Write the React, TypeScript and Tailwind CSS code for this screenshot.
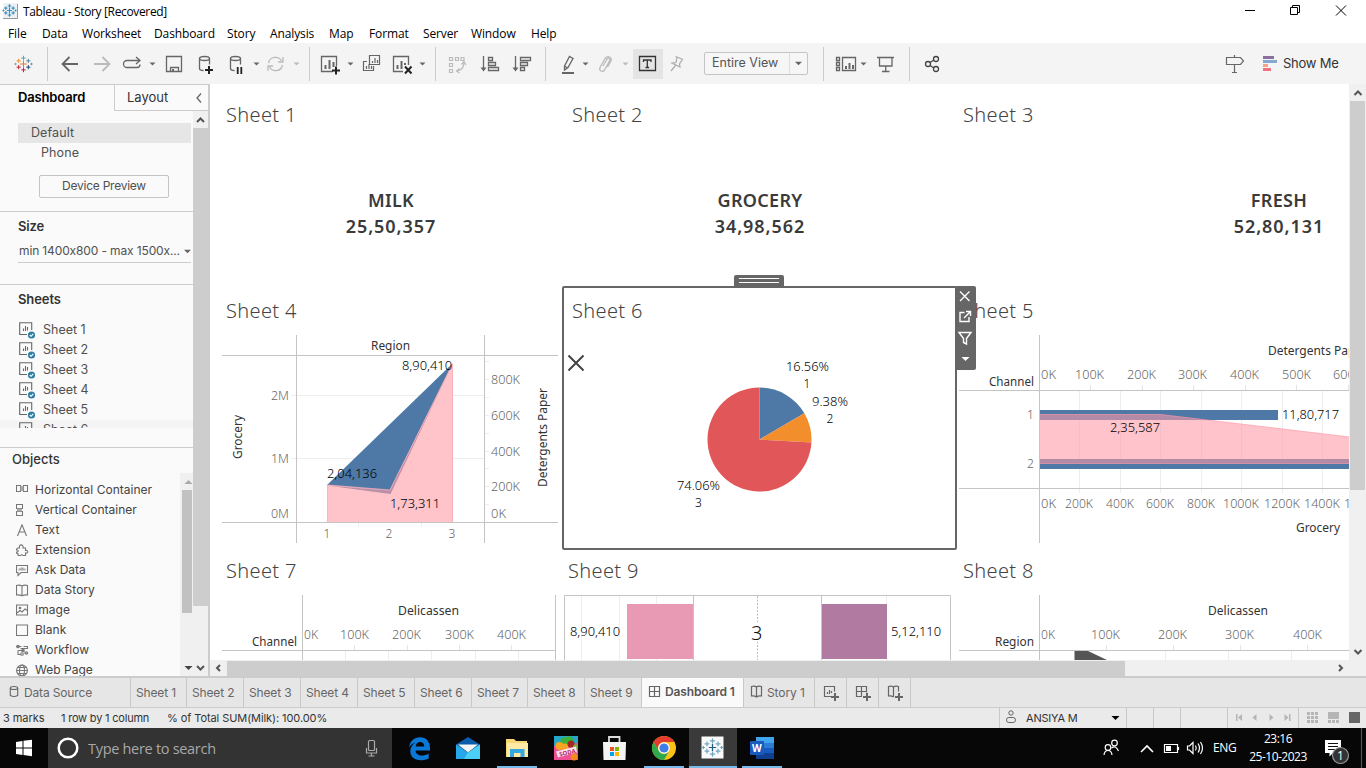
import React from "react";

type Kids = { children?: React.ReactNode };

/* Icon whose drawing coordinates are window coordinates. */
function Ic({ x, y, w, h, c = "#666", sw = 1.3, children }: Kids & { x: number; y: number; w: number; h: number; c?: string; sw?: number }) {
  return (
    <svg className="block shrink-0" width={w} height={h} viewBox={`${x} ${y} ${w} ${h}`} fill="none" stroke={c} strokeWidth={sw}>
      {children}
    </svg>
  );
}

function Tb({ x, w, c, sw, children }: Kids & { x: number; w: number; c?: string; sw?: number }) {
  return <Ic x={x} y={43} w={w} h={41} c={c} sw={sw}>{children}</Ic>;
}

function Caret({ x, y = 64, c = "#666", s = 3 }: { x: number; y?: number; c?: string; s?: number }) {
  return <path d={`M${x - s} ${y - s / 2}h${2 * s}l${-s} ${s}z`} fill={c} stroke="none" />;
}

const plusSpots = [
  [0, 0, 3.2], [0, -5.6, 2.2], [0, 5.6, 2.2], [-4.6, -3, 2], [4.6, -3, 2], [-4.6, 3, 2], [4.6, 3, 2], [-7.6, 0, 1.2], [7.6, 0, 1.2],
];
const plusMix = ["#e8762d", "#6aa0b0", "#c72037", "#eb9129", "#5b879b", "#c72037", "#1f457e", "#77aabb", "#7099a6"];

function Plus({ x, y, k = 1, mono, sw = 1 }: { x: number; y: number; k?: number; mono?: string; sw?: number }) {
  return (
    <g strokeWidth={sw}>
      {plusSpots.map(([dx, dy, r], i) => {
        const px = x + dx * k, py = y + dy * k, q = r * k;
        return <path key={i} stroke={mono ?? plusMix[i]} d={`M${px - q} ${py}H${px + q}M${px} ${py - q}V${py + q}`} />;
      })}
    </g>
  );
}

/* Chart label fitted to a given width. */
function L({ x, y, w, s = 12, c = "#666", b = 300, children }: Kids & { x: number; y: number; w?: number; s?: number; c?: string; b?: number }) {
  return (
    <text x={x} y={y + s * 0.36} textLength={w} lengthAdjust="spacingAndGlyphs" fontSize={s} fill={c} fontWeight={b} stroke="none">
      {children}
    </text>
  );
}

function Chart({ x, y, w, h, children }: Kids & { x: number; y: number; w: number; h: number }) {
  return (
    <svg className="block shrink-0 font-['Noto_Sans',sans-serif]" width={w} height={h} viewBox={`${x} ${y} ${w} ${h}`} fill="none">
      {children}
    </svg>
  );
}

const menus: [string, string][] = [
  ["File", "w-[34px]"], ["Data", "w-[40px]"], ["Worksheet", "w-[72px]"], ["Dashboard", "w-[73px]"], ["Story", "w-[43px]"], ["Analysis", "w-[59px]"],
  ["Map", "w-[40px]"], ["Format", "w-[54px]"], ["Server", "w-[48px]"], ["Window", "w-[60px]"], ["Help", "w-[40px]"],
];

function TitleBar() {
  return (
    <header className="h-[43px] bg-white font-['Open_Sans','Noto_Sans',sans-serif] text-[12px] text-black">
      <div className="flex h-[23px] items-center">
        <Ic x={0} y={0} w={23} h={23}>
          <rect x="3" y="3" width="15" height="16" fill="#eef1f3" stroke="none" />
          <path d="M17.500 4V18.500H3" stroke="#999" strokeWidth="1" />
          <Plus x={9.500} y={10.500} k={0.8} mono="#3f8fc0" sw={1.200} />
        </Ic>
        <span className="pt-px text-[12px] tracking-[-0.35px]">Tableau - Story [Recovered]</span>
        <span className="grow" />
        <Ic x={1236} y={0} w={130} h={23} c="#000" sw={1}>
          <path d="M1245 10.500h10M1290.500 7.500h7v7h-7zM1292.500 7V5.500h7v7H1298M1336 5.500l10 10M1346 5.500l-10 10" />
        </Ic>
      </div>
      <nav className="flex h-5 items-center pt-[2px] pl-2">
        {menus.map(([m, w]) => <span key={m} className={`${w} shrink-0 tracking-[-0.12px]`}>{m}</span>)}
      </nav>
    </header>
  );
}

function Toolbar() {
  const g = "#bbb";
  return (
    <div className="flex h-[41px] items-center bg-[#f4f4f4]">
      <Tb x={0} w={50}><Plus x={23.500} y={64} k={1.050} /><path d="M47.500 47v34" stroke="#ccc" strokeWidth="1" /></Tb>
      <Tb x={50} w={36} sw={1.800}><path d="M78 64H63M69.500 57L62.500 64l7 7" /></Tb>
      <Tb x={86} w={30} c={g} sw={1.800}><path d="M94 64h15M102.500 57l7 7-7 7" /></Tb>
      <Tb x={116} w={44}><path d="M134 67.500h-7a3.500 3.500 0 0 1 0-7h12M136 57l4 3.500-4 3.500M134 67.500h3a3 3 0 0 0 3-3" /><Caret x={152.500} /></Tb>
      <Tb x={160} w={30}><path d="M166.500 56.500h15v15h-15zM170.500 71.500v-4h8v4" /><path d="M172 69h2v3h-2z" fill="#666" stroke="none" /></Tb>
      <Tb x={190} w={35}><ellipse cx="204.500" cy="58.500" rx="5" ry="2" /><path d="M199.500 58.500v10q0 2 4 2M209.500 58.500v6" /><path d="M205 70h8M209 66v8" stroke="#222" strokeWidth="2" /></Tb>
      <Tb x={225} w={38}><ellipse cx="235.500" cy="58.500" rx="5" ry="2" /><path d="M230.500 58.500v10q0 2 4 2M240.500 58.500v6" /><path d="M237.700 67v7M241.300 67v7" stroke="#222" strokeWidth="1.800" /><Caret x={256.500} /></Tb>
      <Tb x={263} w={48} c={g}><path d="M268.500 63a7 7 0 0 1 13-2M282.500 65a7 7 0 0 1-13 2M283 57v5h-5M268 71v-5h5" /><Caret x={296.500} c={g} /><path d="M309.500 47v34" stroke="#ccc" strokeWidth="1" /></Tb>
      <Tb x={311} w={47}><path d="M333 71.500h-11.500v-15h15V66" /><path d="M325.500 69v-4M329.500 69v-9M333.500 67v-5" strokeWidth="2" /><path d="M332 70.500h8M336 66.500v8" stroke="#222" strokeWidth="2" /><Caret x={350.500} /></Tb>
      <Tb x={358} w={30}><path d="M369.500 55.500h10v9h-10zM367 61.500h-3.500v9h10V66M372.500 63v-2M375 63v-5M377.500 63v-3M366.500 69v-3M369 69v-5M371.500 69v-3" strokeWidth="1.200" /></Tb>
      <Tb x={388} w={50}><path d="M403 71.500h-9.500v-15h15V65" /><path d="M397.500 69v-4M401.500 69v-8M405 65v-2" strokeWidth="2" /><path d="M405 66.500l6.500 7M411.500 66.500l-6.500 7" stroke="#222" strokeWidth="2" /><Caret x={422.500} /><path d="M435.500 47v34" stroke="#ccc" strokeWidth="1" /></Tb>
      <Tb x={438} w={34} c={g} sw={1.200}><path d="M449.500 57.500h3v3h-3zM455.500 57.500h3v3h-3zM461 57.500h3v3h-3zM449.500 63.500h3v3h-3zM449.500 69.500h3v3h-3zM464 62q0 8-7 9M461.500 64.500l2.500-3 2 3.500M459.500 68.500l-3 2.500 3 2" /></Tb>
      <Tb x={472} w={34}><path d="M483.500 56v14M488.500 57.500h4v3h-4zM488.500 62.500h7v3h-7zM488.500 67.500h10v3h-10z" /><path d="M480.500 67.500h6l-3 4z" fill="#666" stroke="none" /></Tb>
      <Tb x={506} w={44}><path d="M515.500 56v14M520.500 57.500h10v3h-10zM520.500 62.500h7v3h-7zM520.500 67.500h4v3h-4z" /><path d="M512.500 67.500h6l-3 4z" fill="#666" stroke="none" /><path d="M545.500 47v34" stroke="#ccc" strokeWidth="1" /></Tb>
      <Tb x={550} w={42}><path d="M564.500 66l5-9.500 3.500 2-5 9-3.500 2.500zM564.500 66l3.500 2" /><path d="M562 73h12" strokeWidth="2" /><Caret x={585.500} /></Tb>
      <Tb x={592} w={41} c={g}><path d="M603 66l4-7q1.500-1.500 2.500 0t-.5 3l-4.500 8q-1.500 2-3.500 1t-1-3.500l5-9q2-2.500 4.500-1.500t1.500 4l-3.500 6" /><Caret x={625.500} c={g} /></Tb>
      <div className="h-[30px] bg-[#e4e4e4]"><Ic x={633} y={49} w={30} h={30} c="#333"><path d="M639.500 56.500h16v14h-16zM643.500 62v-2h7.500v2M647.300 60v7.500M645.500 67.500h3.600" strokeWidth="1.300" /></Ic></div>
      <Tb x={663} w={41} c="#aaa" sw={1.200}><path d="M675.500 56.500l7.500 3M677 57.500l-1 5-4 .5 8 4-.5-3 3-4.500M675.500 65.500l-4.500 5.500" /></Tb>
      <div className="flex h-[23px] w-[104px] items-center rounded-xs border border-[#c4c4c4] bg-[#f6f6f6]">
        <span className="w-[84px] shrink-0 pl-[7px] font-['Inter',sans-serif] text-[12.5px] text-[#555]">Entire View</span>
        <span className="flex h-full grow items-center justify-center border-l border-[#ddd]"><Ic x={0} y={0} w={9} h={7}><Caret x={4.500} y={3.500} s={3.500} /></Ic></span>
      </div>
      <Tb x={808} w={64}><path d="M823.500 47v34" stroke="#ccc" strokeWidth="1" /><path d="M842.500 57.500h13v13h-13zM836.500 57.500h3v3h-3zM836.500 62.500h3v3h-3zM836.500 67.500h3v3h-3z" /><path d="M846 69v-3M849.500 69v-6M853 69v-4" strokeWidth="2" /><Caret x={863.500} /></Tb>
      <Tb x={872} w={96}><path d="M877 57.500h17M879.500 57.500v8.500h12.500v-8.500M885.700 66v5M882 71.500h7.500" /><path d="M909.500 47v34" stroke="#ccc" strokeWidth="1" /><g stroke="#444"><circle cx="928" cy="64" r="2.500" /><circle cx="936" cy="59" r="2.500" /><circle cx="936" cy="69" r="2.500" /><path d="M930 62.500l4-2.500M930 65.500l4 2.500" /></g></Tb>
      <span className="grow" />
      <Tb x={1216} w={67} sw={1.200}><path d="M1226.500 57.500h14l3 3.500-3 3.500h-14zM1234.500 55v2.500M1234.500 64.500v7.500M1232 72.500h5" />
        <g stroke="none"><path d="M1263 56h11v3h-11z" fill="#8b6f9c" /><path d="M1263 60h14v3h-14z" fill="#82a9d0" /><path d="M1263 64h5v3h-5z" fill="#f4a582" /><path d="M1263 68h8v3h-8z" fill="#f0717f" /></g></Tb>
      <span className="w-[83px] font-['Inter',sans-serif] text-[13px] tracking-[-0.25px] text-[#333]">Show Me</span>
    </div>
  );
}

const objects: [string, React.ReactNode][] = [
  ["Horizontal Container", <><path d="M.5 1.500h4v6h-4zM7.500 1.500h4v6h-4z" /><path d="M4.500 2h3v5h-3z" fill="#aaa" stroke="none" /></>],
  ["Vertical Container", <><path d="M.5.500h6v4h-6zM.5 7.500h6v4h-6z" /><path d="M1 4.500h5v3H1z" fill="#aaa" stroke="none" /></>],
  ["Text", <path d="M1.500 12L6 .8 10.500 12M3 8h6" />],
  ["Extension", <path d="M2 4h1.500C2.500-.3 8 0 7 4h2.500v2.500c3-1 3 3.500 0 2.500v2.500H7q-1-1.500-2.500 0H2V9.500q-2 0-1.500-1.500h1q1.500-1 0-2H.5Q.5 4 2 4z" />],
  ["Ask Data", <><path d="M.5 1.500h11v7H5l-3 3v-3H.5z" /><path d="M3 6V5h2V4h2v1h2v1z" fill="#aaa" stroke="#aaa" /></>],
  ["Data Story", <path d="M.5 1.500q3-1 5.500.5 2.500-1.500 5.500-.5v9.500q-3-.5-5.500.8Q3.500 10.500.5 11zM6 2v9.500" />],
  ["Image", <><path d="M.5 1h11v10H.5z" /><path d="M1 9l3-2.500 2 1.500 3-3 2.500 1.500" /><circle cx="4" cy="4" r=".8" fill="#777" /></>],
  ["Blank", <path d="M.5 1h11v10.500H.5z" />],
  ["Workflow", <><path d="M.5 2.500h5M7.500 2.500h4v2h-7M2 6.500h6M8 9h3.500M2 6.500v4h3" /><circle cx="2" cy="2.500" r="1.300" /><circle cx="7" cy="6.500" r="1.300" /><circle cx="6" cy="10" r="1.300" /><circle cx="10.500" cy="9" r="1.200" /></>],
  ["Web Page", <><circle cx="6" cy="6.500" r="5.400" /><ellipse cx="6" cy="6.500" rx="2.500" ry="5.400" /><path d="M.6 6.500h10.800M1.500 3.500h9M1.500 9.500h9" /></>],
];

function SheetRow({ n }: { n: number }) {
  return (
    <div className="flex h-5 shrink-0 items-center pl-[19px]">
      <svg className="block" width="24" height="18" viewBox="0 0 24 18" fill="none" stroke="#666" strokeWidth="1.100">
        <path d="M8 13.500H.7V1.700h12V9M4.500 10V7.500M6.500 10V5M8.500 9.500V6" />
        <circle cx="12.500" cy="14" r="3.600" fill="#2f7fa8" stroke="none" /><path d="M10.800 14l1.300 1.300 2.200-2.500" stroke="#fff" />
      </svg>
      <span>Sheet {n}</span>
    </div>
  );
}

function Sidebar() {
  return (
    <aside className="flex w-[210px] shrink-0 flex-col border-t border-r-2 border-[#ccc] bg-[#fafafa] font-['Inter',sans-serif] text-[12.5px] text-[#505050]">
      <div className="flex h-[26px] shrink-0">
        <div className="flex w-[114px] items-center pl-[18px] text-[13px] font-semibold tracking-[-0.15px] text-black">Dashboard</div>
        <div className="flex grow items-center border-b border-l border-[#ccc] pl-3 text-[13px] text-[#333]">
          <span className="w-[68px]">Layout</span>
          <Ic x={0} y={0} w={8} h={12}><path d="M6 1.500L2 6l4 4.500" /></Ic>
        </div>
      </div>
      <div className="flex min-h-0 grow">
        <div className="flex w-[193px] flex-col pt-3">
          <div className="mr-0.5 ml-[18px] flex h-5 shrink-0 items-center bg-[#e6e6e6] pt-px pl-[13px] tracking-[0.1px]">Default</div>
          <div className="flex h-5 shrink-0 items-center pt-px pl-[41px] tracking-[0.1px]">Phone</div>
          <div className="mt-3 ml-[39px] flex h-[23px] w-[130px] shrink-0 items-center justify-center rounded-xs border border-[#c4c4c4] pb-[2px] text-[12px] tracking-[-0.25px]">Device Preview</div>
          <div className="mt-[13px] h-[30px] shrink-0 border-t border-[#ccc] pt-[5px] pl-[18px] text-[13px] leading-[18px] font-semibold tracking-[-0.2px] text-[#333]">Size</div>
          <div className="mr-0.5 ml-[18px] flex h-[22px] shrink-0 items-center justify-between border-b border-[#ccc] pb-[2px] pl-px text-[12px]">
            <span className="tracking-[-0.13px] whitespace-nowrap">min 1400x800 - max 1500x...</span>
            <Ic x={0} y={0} w={8} h={8}><Caret x={4.500} y={4.500} s={3.500} /></Ic>
          </div>
          <div className="mt-[21px] h-[35px] shrink-0 border-t border-[#ccc] pt-[5px] pl-[18px] text-[13px] leading-[18px] font-semibold tracking-[-0.1px] text-[#333]">Sheets</div>
          <div className="flex h-[109px] shrink-0 flex-col overflow-hidden pt-px">
            {[1, 2, 3, 4, 5].map((n) => <SheetRow key={n} n={n} />)}
            <div className="bg-[#f4f4f4]"><SheetRow n={6} /></div>
          </div>
          <div className="mt-[19px] h-[26px] shrink-0 border-t border-[#ccc] pt-[2px] pl-3 text-[13px] leading-[18px] font-medium text-[#333]">Objects</div>
          <div className="flex min-h-0 grow overflow-hidden">
            <div className="w-[180px] pt-[7px] text-[12px] text-[#444]">
              {objects.map(([name, art]) => (
                <div key={name} className="flex h-5 items-center pl-4">
                  <svg className="mr-[6px] block" width="13" height="13" viewBox="0 0 13 13" fill="none" stroke="#777" strokeWidth="1.100">{art}</svg>
                  <span className="tracking-[0.02px] whitespace-nowrap">{name}</span>
                </div>
              ))}
            </div>
            <div className="flex w-[13px] flex-col justify-between bg-[#f0f0f0] pl-0.5">
              <Ic x={0} y={0} w={12} h={17}><path d="M2.500 11l4-4 4 4z" fill="#aaa" stroke="none" /></Ic>
              <div className="h-[123px] w-[10px] bg-[#c1c1c1]" />
              <span className="grow" />
              <Ic x={0} y={0} w={12} h={17}><path d="M2.500 7l4 4 4-4z" fill="#444" stroke="none" /></Ic>
            </div>
          </div>
        </div>
        <div className="flex w-[15px] flex-col bg-[#f0f0f0]">
          <Ic x={0} y={0} w={15} h={17} c="#555" sw={2}><path d="M4 11l3.500-3.500L11 11" /></Ic>
          <div className="h-[478px] bg-[#cdcdcd]" />
          <span className="grow" />
          <Ic x={0} y={0} w={15} h={17} c="#555" sw={2}><path d="M4 7l3.500 3.500L11 7" /></Ic>
        </div>
      </div>
    </aside>
  );
}

function SheetTitle({ children, pad = "pl-4" }: Kids & { pad?: string }) {
  return <h2 className={`${pad} font-['Noto_Sans',sans-serif] text-[20px] leading-[28px] font-light tracking-[0.35px] text-[#444]`}>{children}</h2>;
}

function Ban({ name, value }: { name: string; value: string }) {
  return (
    <div className="pt-[58px] text-center font-['Noto_Sans',sans-serif] text-[18px] leading-[26px] font-semibold text-[#3a3a3a]">
      <div className="tracking-[0.3px]">{name}</div>
      <div className="tracking-[0.95px]">{value}</div>
    </div>
  );
}

const dark = "#333";

function Sheet4() {
  return (
    <Chart x={210} y={330} w={353} h={215}>
      <path d="M291 395.500h193M291 458.500h193M358.500 523v4M421.500 523v4" stroke="#eee" />
      {[361.5, 379.5, 397.5, 415.5, 433.5, 451.5, 468.5, 486.5, 504.5].map((y) => <path key={y} d={`M485 ${y}h4`} stroke="#eee" />)}
      <path d="M327 485L452.500 363.500V522H327z" fill="#4e79a7" />
      <path d="M327 485l63 5.500L452.500 363.500V522H327z" fill="#ffc3ca" />
      <path d="M327 485.500l63 5L452 365l-61.500 129z" fill="#ba8fa7" />
      <path d="M327.500 522V485l62.500 5 62.500-126v158" stroke="#ffb0ba" strokeOpacity=".8" />
      <path d="M296.500 335v208M484.500 335v208M222 355.500h336M222 522.500h336" stroke="#c4c4c4" />
      <L x={371} y={345.500} w={39} c={dark} b={400}>Region</L>
      <L x={271} y={395.500} w={18}>2M</L><L x={271} y={458.500} w={18}>1M</L><L x={271} y={513.500} w={18}>0M</L>
      <L x={323.500} y={533.500}>1</L><L x={385.500} y={533.500}>2</L><L x={448.500} y={533.500}>3</L>
      <L x={491} y={379.500} w={29}>800K</L><L x={491} y={415.500} w={29}>600K</L><L x={491} y={451.500} w={29}>400K</L><L x={491} y={486.500} w={29}>200K</L><L x={491} y={513.500} w={15}>0K</L>
      <L x={402} y={365.500} w={50} c="#000">8,90,410</L><L x={327} y={473.500} w={50} c="#000">2,04,136</L><L x={390} y={503.500} w={50} c="#000">1,73,311</L>
      <g transform="rotate(-90 238 437)"><L x={216} y={437} w={44} c={dark} b={400}>Grocery</L></g>
      <g transform="rotate(-90 543 437)"><L x={493} y={437} w={99} c={dark} b={400}>Detergents Paper</L></g>
    </Chart>
  );
}

function Sheet6() {
  const R = 52, cx = 759.5, cy = 439.5;
  const pt = (p: number) => `${cx + R * Math.sin(p * 2 * Math.PI)} ${cy - R * Math.cos(p * 2 * Math.PI)}`;
  const slice = (a: number, b: number) => `M${cx} ${cy}L${pt(a)}A${R} ${R} 0 ${b - a > 0.5 ? 1 : 0} 1 ${pt(b)}z`;
  return (
    <Chart x={565} y={330} w={388} h={215}>
      <path d={slice(0, 0.1656)} fill="#4e79a7" /><path d={slice(0.1656, 0.2594)} fill="#f28e2b" /><path d={slice(0.2594, 1)} fill="#e15759" />
      <path d="M568.500 355.500l15 15M583.500 355.500l-15 15" stroke="#444" strokeWidth="2" />
      <L x={786} y={366.500} w={43} c="#000">16.56%</L><L x={803.500} y={384} c="#000">1</L>
      <L x={812} y={401.500} w={36} c="#000">9.38%</L><L x={826.500} y={419} c="#000">2</L>
      <L x={677} y={485.500} w={43} c="#000">74.06%</L><L x={695} y={503} c="#000">3</L>
    </Chart>
  );
}

function Sheet5() {
  const top: [string, number, number][] = [["0K", 1041, 15], ["100K", 1075, 29], ["200K", 1127, 29], ["300K", 1178, 29], ["400K", 1230, 29], ["500K", 1282, 29], ["600K", 1333, 29]];
  const low: [string, number, number][] = [["0K", 1041, 15], ["200K", 1065, 28], ["400K", 1106, 28], ["600K", 1146, 28], ["800K", 1187, 28], ["1000K", 1223, 36], ["1200K", 1264, 36], ["1400K", 1304, 36], ["1600K", 1344, 36]];
  return (
    <Chart x={957} y={330} w={392} h={215}>
      {[1090.5, 1142.5, 1193.5, 1245.5, 1296.5, 1348.5].map((x) => <path key={x} d={`M${x} 385v5`} stroke="#e4e4e4" />)}
      {[1079.5, 1120.5, 1160.5, 1201.5, 1241.5, 1282.5, 1322.5].map((x) => <path key={x} d={`M${x} 391v102`} stroke="#eee" />)}
      <path d="M1040 410h238v10h-238zM1040 459h309v10h-309z" fill="#4e79a7" />
      <path d="M1040 414h120l189 22.500V464h-309z" fill="#ff98a5" fillOpacity=".58" />
      <path d="M1040 414.500h120l189 22.500M1040 463.500h309" stroke="#ff98a5" strokeOpacity=".4" />
      <path d="M1039.500 335v208M959 390.500h390M959 488.500h390" stroke="#c4c4c4" />
      <L x={1268} y={350.500} w={99} c={dark} b={400}>Detergents Paper</L>
      {top.map(([t, x, w]) => <L key={t} x={x} y={374.500} w={w}>{t}</L>)}
      {low.map(([t, x, w]) => <L key={t} x={x} y={503.500} w={w}>{t}</L>)}
      <L x={989} y={381.500} w={45} c={dark} b={400}>Channel</L><L x={1027} y={414.500}>1</L><L x={1027} y={463.500}>2</L>
      <L x={1282} y={414.500} w={57} c="#000">11,80,717</L><L x={1110} y={427.500} w={50} c="#000">2,35,587</L>
      <L x={1296} y={528} w={44} c={dark} b={400}>Grocery</L>
    </Chart>
  );
}

function Sheet7() {
  const t: [string, number, number][] = [["0K", 304, 14], ["100K", 340, 29], ["200K", 392, 29], ["300K", 445, 29], ["400K", 497, 29]];
  return (
    <Chart x={210} y={590} w={353} h={70}>
      {[354.5, 407.5, 459.5, 511.5].map((x) => <path key={x} d={`M${x} 645v5`} stroke="#e4e4e4" />)}
      {[345.5, 388.5, 431.5, 475.5, 518.5].map((x) => <path key={x} d={`M${x} 651v9`} stroke="#eee" />)}
      <path d="M302.500 595v65M555.500 595v65M222 650.500h333" stroke="#c4c4c4" />
      <L x={398} y={611} w={61} c={dark} b={400}>Delicassen</L><L x={252} y={642} w={45} c={dark} b={400}>Channel</L>
      {t.map(([s, x, w]) => <L key={s} x={x} y={635} w={w}>{s}</L>)}
    </Chart>
  );
}

function Sheet9() {
  return (
    <Chart x={563} y={590} w={394} h={70}>
      <path d="M581.500 596v64M619.500 596v64M656.500 596v64M886.500 596v64" stroke="#eee" />
      <path d="M564.500 660V595.500h386V660M693.500 596v64M821.500 596v64" stroke="#c4c4c4" />
      <path d="M757.500 596v64" stroke="#bbb" strokeDasharray="2 1.500" />
      <path d="M627 604h66v55h-66z" fill="#e899b4" /><path d="M822 604h65v55h-65z" fill="#b07aa1" />
      <path d="M748 622h18v20h-18z" fill="#fff" />
      <L x={570} y={632} w={50} c="#000">8,90,410</L><L x={891} y={632} w={50} c="#000">5,12,110</L><L x={751} y={633} s={20} c="#111">3</L>
    </Chart>
  );
}

function Sheet8() {
  const t: [string, number, number][] = [["0K", 1041, 14], ["100K", 1091, 29], ["200K", 1158, 29], ["300K", 1225, 29], ["400K", 1293, 29]];
  return (
    <Chart x={957} y={590} w={392} h={70}>
      {[1106.5, 1173.5, 1240.5, 1307.5].map((x) => <path key={x} d={`M${x} 645v5`} stroke="#e4e4e4" />)}
      {[1165.5, 1228.5, 1291.5].map((x) => <path key={x} d={`M${x} 651v9`} stroke="#eee" />)}
      <path d="M1039.500 595v65M959 650.500h390" stroke="#c4c4c4" />
      <path d="M1074.500 651H1088l19 9h-32.500z" fill="#555" />
      <L x={1208} y={611} w={60} c={dark} b={400}>Delicassen</L><L x={995} y={642} w={39} c={dark} b={400}>Region</L>
      {t.map(([s, x, w]) => <L key={s} x={x} y={635} w={w}>{s}</L>)}
    </Chart>
  );
}

function Canvas() {
  return (
    <main className="relative grid h-[576px] w-[1139px] grid-cols-[353px_394px_392px] grid-rows-[196px_260px_120px] overflow-hidden bg-white">
      <section className="w-[362px] pt-[17px]"><SheetTitle>Sheet 1</SheetTitle><Ban name="MILK" value="25,50,357" /></section>
      <section className="pt-[17px]"><SheetTitle pad="pl-[9px]">Sheet 2</SheetTitle><Ban name="GROCERY" value="34,98,562" /></section>
      <section className="w-[644px] pt-[17px]"><SheetTitle pad="pl-1.5">Sheet 3</SheetTitle><Ban name="FRESH" value="52,80,131" /></section>
      <section className="pt-[17px]"><SheetTitle>Sheet 4</SheetTitle><div className="pt-[5px]"><Sheet4 /></div></section>
      <section className="pt-[17px]"><SheetTitle pad="pl-[9px]">Sheet 6</SheetTitle><div className="pt-[5px] pl-0.5"><Sheet6 /></div></section>
      <section className="pt-[17px]"><SheetTitle pad="pl-1.5">Sheet 5</SheetTitle><div className="pt-[5px]"><Sheet5 /></div></section>
      <section className="pt-[17px]"><SheetTitle>Sheet 7</SheetTitle><div className="pt-[5px]"><Sheet7 /></div></section>
      <section className="pt-[17px]"><SheetTitle pad="pl-[5px]">Sheet 9</SheetTitle><div className="pt-[5px]"><Sheet9 /></div></section>
      <section className="pt-[17px]"><SheetTitle pad="pl-1.5">Sheet 8</SheetTitle><div className="pt-[5px]"><Sheet8 /></div></section>
      <div className="absolute top-[202px] left-[352px] h-[264px] w-[395px] rounded-xs border-2 border-[#666]" />
      <div className="absolute top-[191px] left-[524px] flex h-[11px] w-[50px] flex-col justify-center gap-[3px] rounded-t-xs bg-[#666] px-[5px]">
        <span className="h-px bg-white" /><span className="h-px bg-white" />
      </div>
      <div className="absolute top-[202px] left-[745px] h-[84px] w-[21px] rounded-xs bg-[#666]">
        <Ic x={955} y={286} w={21} h={84} c="#fff" sw={1.400}>
          <path d="M960 291.500l9.500 9.500M969.500 291.500L960 301M964.500 312.500h-4.500v9h9v-4.500M964 318l6-6M966 311.500h4.500v4.500M959 332.500h12l-4.500 6v5.500l-3-1.500v-4z" /><path d="M961.500 357h8l-4 4z" fill="#fff" stroke="none" />
        </Ic>
      </div>
    </main>
  );
}

function Work() {
  return (
    <div className="flex h-[592px] w-[1156px] flex-col bg-[#f0f0f0]">
      <div className="flex h-[576px]">
        <Canvas />
        <div className="flex w-[17px] flex-col bg-[#f0f0f0] pl-px">
          <Ic x={0} y={0} w={16} h={17} c="#555" sw={2}><path d="M4.500 11l3.500-3.500 3.500 3.500" /></Ic>
          <div className="h-[389px] w-[15px] bg-[#cdcdcd]" />
          <span className="grow" />
          <Ic x={0} y={0} w={16} h={17} c="#555" sw={2}><path d="M4.500 7l3.500 3.500L11.500 7" /></Ic>
        </div>
      </div>
      <div className="flex h-4 w-[1139px] items-center">
        <Ic x={0} y={0} w={17} h={16} c="#555" sw={2}><path d="M10 5L7 8l3 3" /></Ic>
        <div className="h-[15px] w-[898px] bg-[#cdcdcd]" />
        <span className="grow" />
        <Ic x={0} y={0} w={17} h={16} c="#555" sw={2}><path d="M7 5l3 3-3 3" /></Ic>
      </div>
    </div>
  );
}

const tabs: [string, string][] = [
  ["Sheet 1", "w-[56px]"], ["Sheet 2", "w-[57px]"], ["Sheet 3", "w-[57px]"], ["Sheet 4", "w-[57px]"], ["Sheet 5", "w-[57px]"],
  ["Sheet 6", "w-[57px]"], ["Sheet 7", "w-[56px]"], ["Sheet 8", "w-[57px]"], ["Sheet 9", "w-[57px]"],
];

function Tabs() {
  return (
    <div className="flex h-8 border-t-2 border-b border-[#ccc] bg-[#e6e6e6] font-['Inter',sans-serif] text-[12px] text-[#666]">
      <div className="flex w-[131px] items-center border-r border-[#c8c8c8]">
        <Ic x={0} y={678} w={24} h={29} sw={1.100}><ellipse cx="14" cy="688" rx="3.700" ry="1.500" /><path d="M10.300 688v7.500q3.700 2 7.400 0V688" /></Ic>
        <span className="tracking-[-0.15px]">Data Source</span>
      </div>
      {tabs.map(([t, w]) => <div key={t} className={`${w} flex shrink-0 items-center border-r border-[#c8c8c8] pl-[5px] tracking-[-0.15px] whitespace-nowrap`}>{t}</div>)}
      <div className="flex w-[102px] shrink-0 items-center border-r border-[#c8c8c8] bg-[#fafafa] font-semibold text-[#555]">
        <Ic x={642} y={678} w={23} h={29} sw={1.200}><path d="M649.500 686.500h10v10h-10zM654.500 686.500v10M649.500 691.500h10" /></Ic>
        <span className="pb-0.5 tracking-[-0.15px] whitespace-nowrap">Dashboard 1</span>
      </div>
      <div className="flex w-[71px] shrink-0 items-center border-r border-[#c8c8c8]">
        <Ic x={744} y={678} w={23} h={29} sw={1.200}><path d="M751.500 686.500q3-1 5 .5 2-1.500 5-.5v9.500q-3-.5-5 1-2-1.500-5-1zM756.500 687v10" /></Ic>
        <span className="tracking-[-0.1px] whitespace-nowrap">Story 1</span>
      </div>
      <div className="w-8 border-r border-[#c8c8c8]"><Ic x={815} y={678} w={31} h={29} sw={1.200}><path d="M831 696.500h-6.500v-10h10v5M827.500 694v-2M829.500 694v-4M831.500 693v-2" /><path d="M831 697h8M835 693v8" strokeWidth="2" /></Ic></div>
      <div className="w-8 border-r border-[#c8c8c8]"><Ic x={847} y={678} w={31} h={29} sw={1.200}><path d="M862 696.500h-5.500v-10h10v6M861.500 686.500v10M856.500 691.500h10" /><path d="M863 697h8M867 693v8" strokeWidth="2" /></Ic></div>
      <div className="w-8 border-r border-[#c8c8c8]"><Ic x={879} y={678} w={31} h={29} sw={1.200}><path d="M893.500 697q-2-1.500-5-1v-9.500q3-1 5 .5 2-1.500 5-.5v5M893.500 687v10" /><path d="M895 697h8M899 693v8" strokeWidth="2" /></Ic></div>
    </div>
  );
}

function Status() {
  return (
    <div className="flex h-5 items-center bg-[#eaeaea] font-['Inter',sans-serif] text-[11px] text-[#333]">
      <span className="w-[61px] pl-[3px] tracking-[-0.05px]">3 marks</span>
      <span className="w-[106px] tracking-[-0.2px]">1 row by 1 column</span>
      <span className="tracking-[-0.08px]">% of Total SUM(Milk): 100.00%</span>
      <span className="grow" />
      <Ic x={999} y={708} w={27} h={20} sw={1}><path d="M999.500 708v20" stroke="#c8c8c8" /><circle cx="1011" cy="713" r="2.200" /><rect x="1006.500" y="717.500" width="9" height="5" rx="2.400" /></Ic>
      <span className="w-[80px] tracking-[-0.2px]">ANSIYA M</span>
      <Ic x={1106} y={708} w={260} h={20} sw={1}>
        <Caret x={1115.500} y={718} c="#000" s={4} />
        <path d="M1126.500 708v20M1153.500 708v20M1180.500 708v20M1227.500 708v20M1298.500 708v20" stroke="#c8c8c8" />
        <g fill="#b5b5b5" stroke="none">
          <path d="M1236 714h1.500v7h-1.500zM1242 714v7l-4-3.500zM1256.500 714v7l-4-3.500zM1269.500 714v7l4-3.500zM1284.500 714v7l4-3.500zM1289 714h1.500v7h-1.500z" />
          {[0, 4, 8].map((dx) => [0, 4, 8].map((dy) => <rect key={`${dx}-${dy}`} x={1307 + dx} y={712 + dy} width="3" height="3" />))}
          <path d="M1328 712h11v7h-11zM1328 720h3v3h-3zM1332 720h3v3h-3zM1336 720h3v3h-3z" /><path d="M1349 712h11v11h-11z" fill="#666" />
        </g>
      </Ic>
    </div>
  );
}

function Tk({ x, w, c = "#fff", sw = 1.2, children }: Kids & { x: number; w: number; c?: string; sw?: number }) {
  return <Ic x={x} y={728} w={w} h={40} c={c} sw={sw}>{children}</Ic>;
}

function Taskbar() {
  return (
    <footer className="flex h-10 items-center bg-[#070707] font-['Open_Sans','Noto_Sans',sans-serif] text-white">
      <Tk x={0} w={48}><path d="M16 742l6.500-1v6.500H16zM23.500 740.800L32 739.700v7.800h-8.500zM16 748.500h6.500v6.500l-6.500-1zM23.500 748.500H32v7.800l-8.500-1.200z" fill="#fff" stroke="none" /></Tk>
      <div className="flex h-full w-[344px] shrink-0 items-center bg-[#333]">
        <Tk x={48} w={40}><circle cx="68" cy="748" r="9.300" strokeWidth="2.500" /></Tk>
        <span className="grow pt-px text-[14.5px] tracking-[-0.3px] text-[#a8a8a8]">Type here to search</span>
        <Tk x={358} w={34} c="#aaa"><rect x="368.500" y="740.500" width="6" height="10" rx="1" /><path d="M366.500 748v5h10v-5M371.500 753v3M368.500 756h6" /></Tk>
      </div>
      <Tk x={392} w={56}><path d="M409 748c1-6.500 5.500-10.200 11-10.200 6.500 0 10 4.700 10 10.700v2.500h-14.500c.3 3.500 3 5 6 5 2.500 0 5-.6 7.200-2v5c-2.200 1.200-5 1.800-8 1.800-6.500 0-10.400-3.800-10.400-9 0-4 2-7 5-8.600-3.500.8-5 2.700-6.300 4.800zM415.700 747h8.600c0-2.700-1.500-4.400-4.200-4.400-2.500 0-4 1.700-4.400 4.400z" fill="#0a78d7" fillRule="evenodd" stroke="none" transform="translate(0 -.5)" /></Tk>
      <Tk x={448} w={49}><g stroke="none"><path d="M456 744.500l12-7.500 12 7.500v5h-24z" fill="#0b5cad" /><path d="M458 744.500h20l-10 8z" fill="#f4f4f4" /><path d="M456 744.500l12 8 12-8V759h-24z" fill="#27a8ea" /><path d="M480 744.500l-12 8-4 6.500h16z" fill="#4ccff6" /></g></Tk>
      <Tk x={497} w={48}><g stroke="none"><path d="M506 739h8l2 2h11v16h-21z" fill="#f8d775" /><path d="M507 743h21v14h-21z" fill="#ffe9a6" /><path d="M510 757v-8h14.500v8h-4v-4h-6.500v4z" fill="#35a7e0" /><path d="M497 766h40v2h-40z" fill="#76b9ed" /></g></Tk>
      <Tk x={545} w={48}><g stroke="none"><path d="M554 736h24v24h-24z" fill="#ef4f95" /><path d="M554 736h24v7l-24 3z" fill="#25a7c9" /><path d="M561 738l9-2 4 4-9 5-5-2z" fill="#3db23a" /><circle cx="559.500" cy="746" r="4" fill="#f6a623" /><circle cx="565" cy="747" r="3.500" fill="#f6a623" /><circle cx="571" cy="744" r="3.500" fill="#a02a1c" /><circle cx="575.500" cy="747" r="2.500" fill="#71b83a" /><circle cx="574" cy="757" r="3.500" fill="#f38a1f" /></g><path d="M556 751.500l20-5 1 6-19 5z" fill="#fde3ee" stroke="none" /><text x="559" y="755" fontSize="6" fontWeight="700" fill="#b3225d" stroke="none" transform="rotate(-12 566 752)">SODA</text></Tk>
      <Tk x={593} w={49}><path d="M609 744v-7h10.500v7" strokeWidth="1.800" stroke="#ddd" /><g stroke="none"><path d="M603 742h23l-.5 18h-22z" fill="#f4f4f4" /><path d="M610 747h4v4h-4z" fill="#f25022" /><path d="M615 747h4v4h-4z" fill="#7fba00" /><path d="M610 752h4v4h-4z" fill="#00a4ef" /><path d="M615 752h4v4h-4z" fill="#ffb900" /></g></Tk>
      <Tk x={642} w={47}><g stroke="none"><circle cx="664" cy="748" r="12" fill="#fbc116" /><path d="M653.600 742A12 12 0 0 1 674.400 742H664a6 6 0 0 0-5.200 9z" fill="#e33b2e" /><path d="M653.600 742A12 12 0 0 0 664 760l5.200-9a6 6 0 0 1-10.400 0z" fill="#2da94f" /><circle cx="664" cy="748" r="5.800" fill="#fff" /><circle cx="664" cy="748" r="4.600" fill="#3f7ee8" /><path d="M644 766h40v2h-40z" fill="#76b9ed" /></g></Tk>
      <div className="bg-[#3a3a3a]"><Tk x={689} w={48}><path d="M701.500 736.500h22v22h-22z" fill="#fafafa" stroke="none" /><Plus x={712.500} y={747.500} k={1.200} mono="#6fa6c0" sw={1.200} /><path d="M709 747.500h7M712.500 744v7" stroke="#1f5f86" strokeWidth="1.200" /><path d="M689 766h48v2h-48z" fill="#76b9ed" stroke="none" /></Tk></div>
      <Tk x={737} w={50}><g stroke="none"><path d="M756 737h18v6h-18z" fill="#41a5ee" /><path d="M756 743h18v5h-18z" fill="#2b7cd3" /><path d="M756 748h18v5h-18z" fill="#185abd" /><path d="M756 753h18v6h-18z" fill="#103f91" /><rect x="750" y="741" width="14" height="14" rx="1" fill="#185abd" /><path d="M742 766h40v2h-40z" fill="#76b9ed" /><text x="752" y="752" fontSize="10" fontWeight="700" fill="#fff">W</text></g></Tk>
      <span className="grow" />
      <Tk x={1096} w={117}>
        <circle cx="1108" cy="747.500" r="2.800" /><path d="M1104 755q.5-4.500 4-4.500t4 4.500" /><circle cx="1114.500" cy="743" r="2.800" /><path d="M1111.500 748q4-3.500 7 3" />
        <path d="M1141 752l6-6 6 6" strokeWidth="1.600" />
        <path d="M1164.500 744.500h13v8h-13zM1178.500 747v3" /><path d="M1166 746h5v5h-5z" fill="#fff" stroke="none" />
        <path d="M1187.500 746v4h2l3.500 3.500v-11l-3.500 3.500zM1195.500 745.500q1.500 2.500 0 5M1198 743.500q3 4.500 0 9M1200.500 742q4 6 0 12" />
      </Tk>
      <span className="w-[36px] text-[12px] tracking-[-0.3px]">ENG</span>
      <div className="w-[58px] text-center text-[12px] leading-[18px] tracking-[-0.5px] whitespace-nowrap"><div>23:16</div><div>25-10-2023</div></div>
      <Tk x={1307} w={59}>
        <path d="M1325 740h16v13h-8l-3.500 3.500V753h-4.500z" fill="#fff" stroke="none" /><path d="M1328 743.500h10M1328 746.500h10M1328 749.500h7" stroke="#111" />
        <circle cx="1340.500" cy="755.500" r="8" fill="#333" stroke="#999" /><text x="1337" y="760" fontSize="12" fill="#fff" stroke="none">1</text><path d="M1361.500 728v40" stroke="#555" />
      </Tk>
    </footer>
  );
}

export default function App() {
  return (
    <div className="h-[768px] w-[1366px] overflow-hidden bg-white">
      <TitleBar />
      <Toolbar />
      <div className="flex h-[592px]"><Sidebar /><Work /></div>
      <Tabs />
      <Status />
      <Taskbar />
    </div>
  );
}
